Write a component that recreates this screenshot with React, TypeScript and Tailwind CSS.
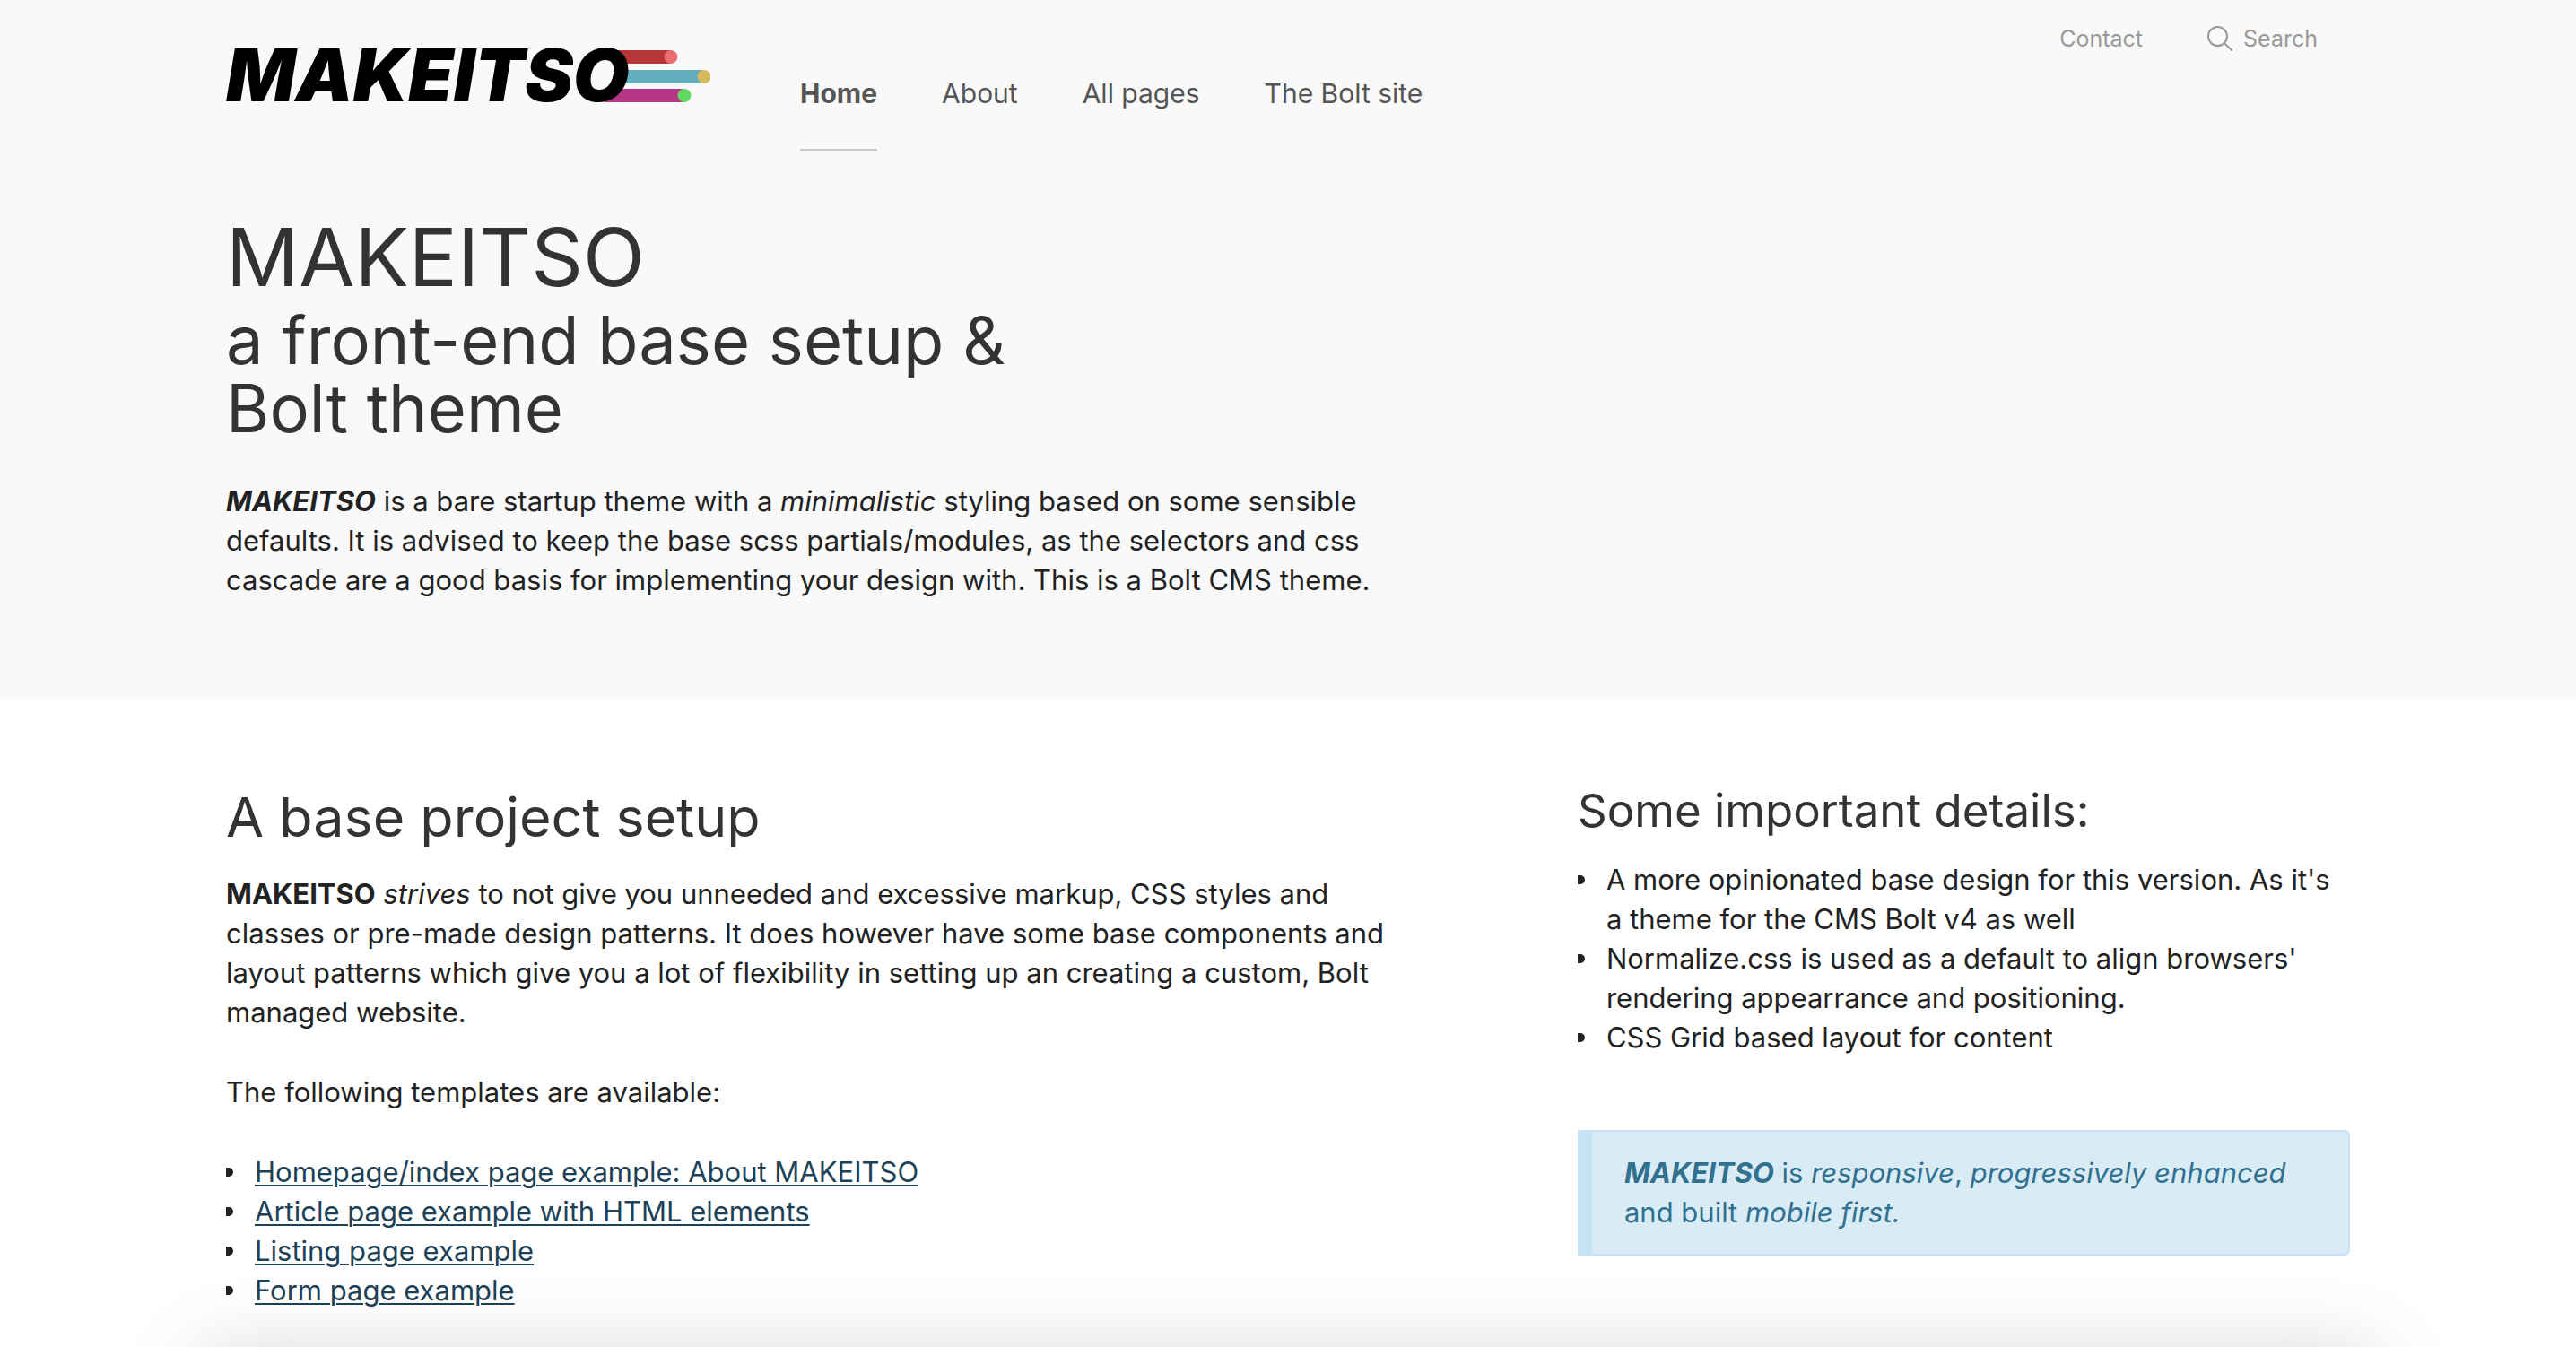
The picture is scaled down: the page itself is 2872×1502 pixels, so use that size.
import type { ReactNode } from "react";

const navLinks = ["Home", "About", "All pages", "The Bolt site"];

const templates = [
  "Homepage/index page example: About MAKEITSO",
  "Article page example with HTML elements",
  "Listing page example",
  "Form page example",
];

function Logo() {
  return (
    <svg width="540" height="110" viewBox="0 -20 540 110" role="img" aria-label="MAKEITSO">
      <rect x="434" y="6" width="62" height="15" fill="#b73637" />
      <circle cx="496" cy="13.5" r="7.5" fill="#ec6e72" />
      <rect x="438" y="28" width="95" height="15" fill="#62adbe" />
      <circle cx="533" cy="35.5" r="7.5" fill="#d9b95d" />
      <rect x="422" y="49" width="89" height="15" fill="#b53686" />
      <circle cx="511" cy="56.5" r="7.5" fill="#5fd95f" />
      <text x="0" y="63" fontFamily="Inter, sans-serif" fontSize="81" fontWeight="900" fontStyle="italic" fill="#000">
        MAKEITSO
      </text>
    </svg>
  );
}

function SearchIcon() {
  return (
    <svg width="28" height="28" viewBox="0 0 28 28" fill="none" stroke="currentColor" strokeWidth="2" strokeLinecap="round" aria-hidden="true">
      <circle cx="11.5" cy="11.5" r="10.5" />
      <path d="M19 19l8 8" />
    </svg>
  );
}

function Line({ children }: { children: ReactNode }) {
  return <span className="block whitespace-nowrap">{children}</span>;
}

function Item({ children }: { children: ReactNode }) {
  return (
    <li className="flex gap-6">
      <span aria-hidden="true" className="mt-[17px] h-[10px] w-2 shrink-0 rounded-r-full bg-[#222]" />
      <span>{children}</span>
    </li>
  );
}

export default function App() {
  return (
    <div className="min-h-screen overflow-hidden bg-white font-[Inter,sans-serif] text-[31px] leading-[44px] text-[#222]">
      <div className="bg-[#f9f9f9] px-[252px] pb-[110px]">
        <header className="flex items-start">
          <a href="#home" className="mt-[30px] block">
            <Logo />
          </a>
          <nav aria-label="Main" className="ml-[100px] flex gap-[72px] pt-[82px] text-[30px] text-[#555]">
            {navLinks.map((label, i) => (
              <a
                key={label}
                href="#nav"
                aria-current={i === 0 ? "page" : undefined}
                className={
                  i === 0
                    ? "border-b-2 border-[#c8c8c8] pb-10 font-bold"
                    : "border-b-2 border-transparent pb-10"
                }
              >
                {label}
              </a>
            ))}
          </nav>
          <div className="ml-auto flex items-start gap-[72px] pt-7 pr-9 text-[25px] leading-[30px] text-[#999]">
            <a href="#contact">Contact</a>
            <button type="button" className="flex items-center gap-3">
              <SearchIcon />
              Search
            </button>
          </div>
        </header>

        <div className="pt-[69px]">
          <h1 className="text-[90px] leading-[100px] text-[#333]">MAKEITSO</h1>
          <p className="mt-1 text-[74px] leading-[76px] text-[#333]">
            a front-end base setup &amp;
            <br />
            Bolt theme
          </p>
          <p className="mt-11">
            <Line>
              <strong>
                <em>MAKEITSO</em>
              </strong>{" "}
              is a bare startup theme with a <em>minimalistic</em> styling based on some sensible
            </Line>
            <Line>defaults. It is advised to keep the base scss partials/modules, as the selectors and css</Line>
            <Line>cascade are a good basis for implementing your design with. This is a Bolt CMS theme.</Line>
          </p>
        </div>
      </div>

      <div className="grid grid-cols-[minmax(0,7fr)_minmax(0,4fr)] px-[252px] pt-[94px] pb-[100px]">
        <main>
          <h2 className="text-[61px] leading-[76px] text-[#333]">A base project setup</h2>
          <p className="mt-[26px]">
            <Line>
              <strong>MAKEITSO</strong> <em>strives</em> to not give you unneeded and excessive markup, CSS styles and
            </Line>
            <Line>classes or pre-made design patterns. It does however have some base components and</Line>
            <Line>layout patterns which give you a lot of flexibility in setting up an creating a custom, Bolt</Line>
            <Line>managed website.</Line>
          </p>
          <p className="mt-[45px]">The following templates are available:</p>
          <ul className="mt-[45px]">
            {templates.map((label) => (
              <Item key={label}>
                <a
                  href="#template"
                  className="text-[#1d4257] underline decoration-2 underline-offset-[3px]"
                >
                  {label}
                </a>
              </Item>
            ))}
          </ul>
        </main>

        <aside>
          <h3 className="text-[51px] leading-[62px] text-[#333]">Some important details:</h3>
          <ul className="mt-6">
            <Item>
              A more opinionated base design for this version. As it's
              <br />a theme for the CMS Bolt v4 as well
            </Item>
            <Item>
              Normalize.css is used as a default to align browsers'
              <br />
              rendering appearrance and positioning.
            </Item>
            <Item>CSS Grid based layout for content</Item>
          </ul>
          <p className="mt-[81px] rounded-r-md border-2 border-l-[16px] border-[#c5e3f5] bg-[#d9ecf6] py-6 pl-9 text-[#31708f]">
            <strong>
              <em>MAKEITSO</em>
            </strong>{" "}
            is <em>responsive</em>, <em>progressively enhanced</em>
            <br />
            and built <em>mobile first.</em>
          </p>
        </aside>
      </div>

      <div
        aria-hidden="true"
        className="pointer-events-none fixed inset-x-[222px] -bottom-[208px] h-[200px] shadow-[0_0_90px_rgba(0,0,0,0.17)]"
      />
    </div>
  );
}
